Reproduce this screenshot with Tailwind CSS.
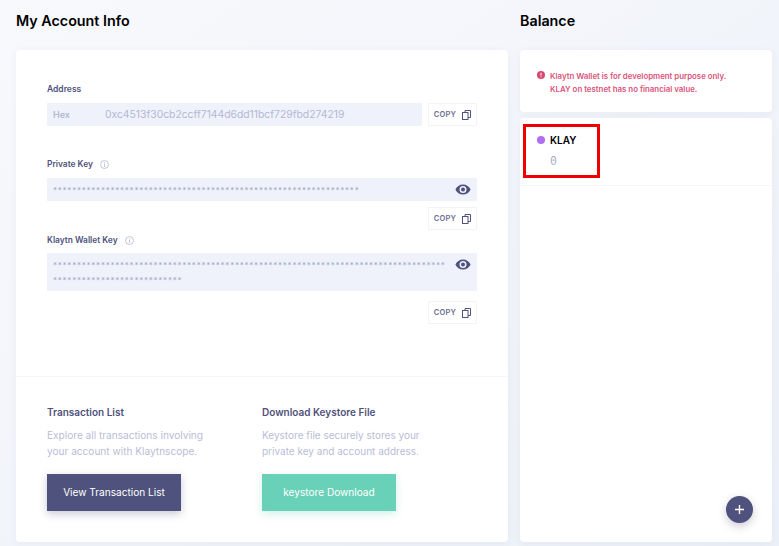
<!DOCTYPE html>
<html lang="en">
<head>
    <meta charset="UTF-8">
    <title>My Account Info</title>
    <script src="https://cdn.jsdelivr.net/npm/@tailwindcss/browser@4"></script>
</head>
<body class="w-[779px] h-[546px] overflow-hidden bg-linear-to-br from-[#f8f9fc] to-[#ecf0f8] font-['Inter',sans-serif]">
    <div class="flex gap-3 pl-4 pr-[7px]">
        <!-- Account column -->
        <div class="w-[492px]">
            <h2 class="h-[50px] pt-[11px] text-[14.3px] leading-5 font-semibold text-black">My Account Info</h2>
            <div class="h-[492px] bg-white rounded shadow-[0_2px_8px_rgba(80,90,140,0.06)] flex flex-col">
                <div class="h-[327px] px-[31px] pt-[33px] border-b border-[#f5f6fa]">
                    <p class="text-[8.5px] leading-3 font-semibold text-[#4f527c]">Address</p>
                    <div class="flex gap-[6px] mt-[8px]">
                        <div class="w-[375px] h-[23px] bg-[#eff2fb] flex items-center pl-[6px] text-[#b3b8d5]">
                            <span class="w-[52px] text-[9px] font-semibold">Hex</span>
                            <span class="text-[10.35px] whitespace-nowrap">0xc4513f30cb2ccff7144d6dd11bcf729fbd274219</span>
                        </div>
                        <button class="w-[49px] h-[23px] border border-[#f3f4f9] flex items-center justify-center gap-[6px] text-[7.5px] font-semibold tracking-[0.2px] text-[#6a6d92]">
                            COPY
                            <svg class="w-[9px] h-[10px]" viewBox="0 0 9 10" fill="none" stroke="#4f527c" stroke-width="1"><rect x="0.5" y="2.5" width="5.5" height="7"/><path d="M3 2.5V0.5H8.5V7.5H6"/></svg>
                        </button>
                    </div>

                    <div class="flex items-center gap-[7px] mt-[32px]">
                        <p class="text-[8.4px] leading-3 font-semibold text-[#4f527c]">Private Key</p>
                        <svg class="w-[9px] h-[9px]" viewBox="0 0 9 9" fill="none" stroke="#b4b8cf" stroke-width="0.8"><circle cx="4.5" cy="4.5" r="4"/><path d="M4.5 3.6V7M4.5 2V2.8"/></svg>
                    </div>
                    <div class="h-[23px] mt-[8px] bg-[#eff2fb] flex items-center justify-between pl-[6px] pr-[6px]">
                        <span class="text-[8px] tracking-[0.78px] text-[#a4a9c6] whitespace-nowrap">****************************************************************</span>
                        <svg class="w-4 h-[11px]" viewBox="0 0 16 11"><path fill="#4f527c" fill-rule="evenodd" d="M8 0.5C4.6 0.5 1.7 2.5 0.4 5.5 1.7 8.5 4.6 10.5 8 10.5S14.3 8.5 15.6 5.5C14.3 2.5 11.4 0.5 8 0.5ZM8 9A3.5 3.5 0 1 1 8 2 3.5 3.5 0 0 1 8 9ZM8 3.5A2 2 0 1 0 8 7.5 2 2 0 0 0 8 3.5Z"/></svg>
                    </div>
                    <div class="flex justify-end mt-[6px]">
                        <button class="w-[49px] h-[23px] border border-[#f3f4f9] flex items-center justify-center gap-[6px] text-[7.5px] font-semibold tracking-[0.2px] text-[#6a6d92]">
                            COPY
                            <svg class="w-[9px] h-[10px]" viewBox="0 0 9 10" fill="none" stroke="#4f527c" stroke-width="1"><rect x="0.5" y="2.5" width="5.5" height="7"/><path d="M3 2.5V0.5H8.5V7.5H6"/></svg>
                        </button>
                    </div>

                    <div class="flex items-center gap-[7px] mt-[4px]">
                        <p class="text-[8.4px] leading-3 font-semibold text-[#4f527c]">Klaytn Wallet Key</p>
                        <svg class="w-[9px] h-[9px]" viewBox="0 0 9 9" fill="none" stroke="#b4b8cf" stroke-width="0.8"><circle cx="4.5" cy="4.5" r="4"/><path d="M4.5 3.6V7M4.5 2V2.8"/></svg>
                    </div>
                    <div class="h-[38px] mt-[7px] bg-[#eff2fb] flex justify-between pl-[6px] pr-[6px] pt-[5px]">
                        <div class="text-[8px] leading-[14.5px] tracking-[0.78px] text-[#a4a9c6] whitespace-nowrap">
                            <div>**********************************************************************************</div>
                            <div>***************************</div>
                        </div>
                        <svg class="w-4 h-[11px] mt-[1px]" viewBox="0 0 16 11"><path fill="#4f527c" fill-rule="evenodd" d="M8 0.5C4.6 0.5 1.7 2.5 0.4 5.5 1.7 8.5 4.6 10.5 8 10.5S14.3 8.5 15.6 5.5C14.3 2.5 11.4 0.5 8 0.5ZM8 9A3.5 3.5 0 1 1 8 2 3.5 3.5 0 0 1 8 9ZM8 3.5A2 2 0 1 0 8 7.5 2 2 0 0 0 8 3.5Z"/></svg>
                    </div>
                    <div class="flex justify-end mt-[10px]">
                        <button class="w-[49px] h-[23px] border border-[#f3f4f9] flex items-center justify-center gap-[6px] text-[7.5px] font-semibold tracking-[0.2px] text-[#6a6d92]">
                            COPY
                            <svg class="w-[9px] h-[10px]" viewBox="0 0 9 10" fill="none" stroke="#4f527c" stroke-width="1"><rect x="0.5" y="2.5" width="5.5" height="7"/><path d="M3 2.5V0.5H8.5V7.5H6"/></svg>
                        </button>
                    </div>
                </div>

                <div class="flex px-[31px] pt-[28px]">
                    <div class="w-[215px]">
                        <h3 class="text-[10px] leading-[14px] font-semibold text-[#4f527c]">Transaction List</h3>
                        <p class="mt-[9px] text-[10.1px] leading-[15.5px] text-[#b9bdd8]">Explore all transactions involving<br>your account with Klaytnscope.</p>
                        <button class="mt-[15px] w-[134px] h-[37px] bg-[#4f527c] text-white text-[10.1px] shadow-[0_3px_8px_rgba(79,82,124,0.3)]">View Transaction List</button>
                    </div>
                    <div>
                        <h3 class="text-[10px] leading-[14px] font-semibold text-[#4f527c]">Download Keystore File</h3>
                        <p class="mt-[9px] text-[10px] leading-[15.5px] text-[#b9bdd8]">Keystore file securely stores your<br>private key and account address.</p>
                        <button class="mt-[15px] w-[134px] h-[37px] bg-[#69d1b7] text-white text-[10.1px] shadow-[0_3px_8px_rgba(105,209,183,0.3)]">keystore Download</button>
                    </div>
                </div>
            </div>
        </div>

        <!-- Balance column -->
        <div class="w-[252px]">
            <h2 class="h-[50px] pt-[11px] text-[14.3px] leading-5 font-semibold text-black">Balance</h2>
            <div class="h-[62px] bg-white rounded shadow-[0_2px_8px_rgba(80,90,140,0.06)] flex items-start gap-[5px] pl-[17px] pt-[20px]">
                <svg class="w-2 h-2 mt-[1px]" viewBox="0 0 8 8"><circle cx="4" cy="4" r="4" fill="#d9486f"/><path d="M4 1.8V4.6M4 5.4V6.3" stroke="#fff" stroke-width="1"/></svg>
                <p class="text-[7.85px] leading-[13px] font-semibold text-[#d9537a]">Klaytn Wallet is for development purpose only.<br>KLAY on testnet has no financial value.</p>
            </div>
            <div class="relative h-[424px] mt-[6px] bg-white rounded shadow-[0_2px_8px_rgba(80,90,140,0.06)]">
                <div class="h-[68px] pl-[17px] pt-[14px] border-b border-[#f6f7fb]">
                    <div class="flex items-center gap-[5px]">
                        <span class="w-2 h-2 rounded-full bg-[#b06ef0]"></span>
                        <span class="text-[10px] leading-[16px] font-semibold text-black">KLAY</span>
                    </div>
                    <p class="mt-[5px] ml-[13px] font-['DejaVu_Sans_Mono',monospace] text-[11.5px] leading-4 text-[#a9aec8]">0</p>
                </div>
                <!-- annotation box -->
                <div class="absolute left-[3px] top-[6px] w-[77px] h-[54px] border-[3px] border-[#ee0000]"></div>
                <button class="absolute right-[19px] bottom-[19px] w-[27px] h-[27px] rounded-full bg-[#4f527c] shadow-[0_3px_8px_rgba(79,82,124,0.3)] flex items-center justify-center">
                    <svg class="w-[9px] h-[9px]" viewBox="0 0 9 9" stroke="#fff" stroke-width="1.4"><path d="M4.5 0V9M0 4.5H9"/></svg>
                </button>
            </div>
        </div>
    </div>
</body>
</html>
